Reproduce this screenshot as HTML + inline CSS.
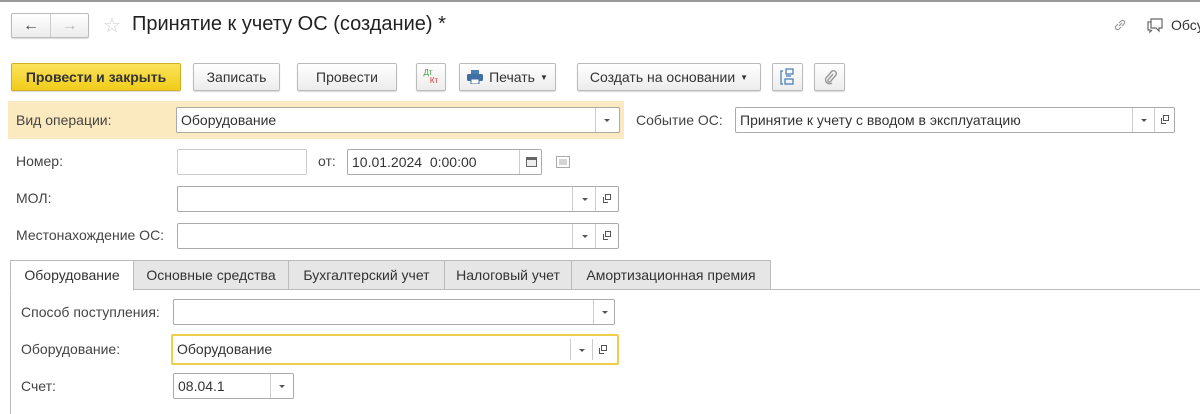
<!DOCTYPE html>
<html><head><meta charset="utf-8"><style>
*{box-sizing:border-box;margin:0;padding:0}
body{width:1200px;height:414px;background:#fff;font-family:"Liberation Sans",sans-serif;font-size:14px;color:#333;position:relative;overflow:hidden}
.a{position:absolute}
.btn{position:absolute;border:1px solid #bbb;border-radius:2px;background:linear-gradient(#fff,#ececec);box-shadow:0 1px 1px rgba(0,0,0,.15);display:flex;align-items:center;justify-content:center;color:#333;font-size:14px}
.inp{position:absolute;border:1px solid #aaa;border-radius:2px;background:#fff;height:26px;font-size:14px;line-height:24px;padding-left:4px;color:#333}
.sep{position:absolute;top:0;bottom:0;width:1px;background:#ccc}
.dd{position:absolute;top:11px;width:0;height:0;border-left:3px solid transparent;border-right:3px solid transparent;border-top:3px solid #555}
.op{position:absolute;top:7px;width:9px;height:9px}
.lbl{position:absolute;font-size:14px;color:#444}
.tab{position:absolute;top:260px;height:30px;border:1px solid #bbb;background:#e6e6e6;font-size:14px;line-height:28px;text-align:center;color:#333}
</style></head><body>
<div class="a" style="left:0;top:0;width:1200px;height:2px;background:#999"></div>
<div class="btn" style="left:11px;top:13px;width:78px;height:25px;justify-content:flex-start">
 <span style="width:39px;text-align:center;font-size:16px;font-weight:bold;color:#444">&#8592;</span><span style="width:1px;height:23px;background:#ccc"></span><span style="width:38px;text-align:center;font-size:16px;font-weight:bold;color:#bbb">&#8594;</span></div>
<div class="a" style="left:103px;top:13px;font-size:20px;color:#ccc">☆</div>
<div class="a" style="left:132px;top:13px;font-size:20px;color:#222">Принятие к учету ОС (создание) *</div>
<svg class="a" style="left:1112px;top:17px" width="16" height="16" viewBox="0 0 16 16" fill="none" stroke="#999" stroke-width="1.2"><path d="M7 9l3-3M6 7l-2 2a2 2 0 003 3l2-2M10 9l2-2a2 2 0 00-3-3L7 6"/></svg>
<svg class="a" style="left:1146px;top:16px" width="18" height="18" viewBox="0 0 18 18" fill="none" stroke="#666" stroke-width="1.2"><path d="M5 3h11v9h-3v3l-3-3H5z"/><path d="M5 6H2v8h2v2l2-2"/></svg>
<div class="a" style="left:1171px;top:17px;font-size:14px;color:#333">Обсу</div>
<div class="btn" style="left:11px;top:63px;width:170px;height:28px;background:linear-gradient(#fbe35a,#f1cc1a);border-color:#cfb021;font-weight:bold;color:#333">Провести и закрыть</div>
<div class="btn" style="left:193px;top:63px;width:87px;height:28px">Записать</div>
<div class="btn" style="left:297px;top:63px;width:100px;height:28px">Провести</div>
<div class="btn" style="left:416px;top:63px;width:30px;height:28px;font-size:8px;line-height:8px;flex-direction:column"><span style="color:#3a9b3a;margin-left:-6px">Дт</span><span style="color:#d33;margin-left:6px">Кт</span></div>
<div class="btn" style="left:459px;top:63px;width:97px;height:28px"><svg width="16" height="14" viewBox="0 0 16 14" style="margin-right:6px"><rect x="4" y="0" width="8" height="4" fill="#4a7fb5"/><rect x="0" y="4" width="16" height="7" rx="1.5" fill="#3f6fa3"/><rect x="4" y="9" width="8" height="5" fill="#fff" stroke="#3f6fa3"/></svg>Печать <span style="font-size:8px;margin-left:5px">▼</span></div>
<div class="btn" style="left:577px;top:63px;width:184px;height:28px">Создать на основании <span style="font-size:8px;margin-left:5px">▼</span></div>
<div class="btn" style="left:772px;top:63px;width:31px;height:28px"><svg width="16" height="18" viewBox="0 0 16 18" fill="none" stroke="#3f78b5" stroke-width="1.2"><rect x="6" y="1" width="7" height="5"/><rect x="5" y="11" width="8" height="5"/><path d="M3 3H1v13h2M6 8h5"/></svg></div>
<div class="btn" style="left:814px;top:63px;width:31px;height:28px"><svg width="14" height="16" viewBox="0 0 14 16" fill="none" stroke="#999" stroke-width="1.4"><path d="M10 5l-5 6a1.5 1.5 0 002 2l6-7a3 3 0 00-4-4L3 9a4 4 0 006 5"/></svg></div>
<div class="a" style="left:8px;top:101px;width:616px;height:38px;background:#fbe9bf"></div>
<div class="lbl" style="left:16px;top:112px">Вид операции:</div>
<div class="inp" style="left:176px;top:107px;width:444px">Оборудование<div class="sep" style="left:418px"></div><div class="dd" style="left:427px"></div></div>
<div class="lbl" style="left:636px;top:112px">Событие ОС:</div>
<div class="inp" style="left:735px;top:107px;width:440px">Принятие к учету с вводом в эксплуатацию<div class="sep" style="left:396px"></div><div class="dd" style="left:405px"></div><div class="sep" style="left:418px"></div><svg class="op" style="left:424px" viewBox="0 0 9 9" fill="none" stroke="#555"><rect x="3.5" y=".5" width="5" height="5"/><path d="M1.5 3v5.5H6"/></svg></div>
<div class="lbl" style="left:16px;top:153px">Номер:</div>
<div class="inp" style="left:177px;top:149px;width:130px;border-color:#ccc"></div>
<div class="lbl" style="left:318px;top:153px">от:</div>
<div class="inp" style="left:347px;top:149px;width:195px">10.01.2024&nbsp; 0:00:00<div class="sep" style="left:171px"></div><svg class="a" style="left:178px;top:6px" width="11" height="11" viewBox="0 0 11 11"><rect x="0" y="1" width="11" height="10" fill="#666"/><rect x="1" y="4" width="9" height="6" fill="#eee"/></svg></div>
<svg class="a" style="left:556px;top:156px" width="14" height="12" viewBox="0 0 14 12" fill="none" stroke="#aaa"><rect x=".5" y=".5" width="13" height="11"/><path d="M3 4h8M3 6h8M3 8h8"/></svg>
<div class="lbl" style="left:16px;top:190px">МОЛ:</div>
<div class="inp" style="left:177px;top:186px;width:442px"><div class="sep" style="left:394px"></div><div class="dd" style="left:404px"></div><div class="sep" style="left:417px"></div><svg class="op" style="left:424px" viewBox="0 0 9 9" fill="none" stroke="#555"><rect x="3.5" y=".5" width="5" height="5"/><path d="M1.5 3v5.5H6"/></svg></div>
<div class="lbl" style="left:16px;top:227px">Местонахождение ОС:</div>
<div class="inp" style="left:177px;top:223px;width:442px"><div class="sep" style="left:394px"></div><div class="dd" style="left:404px"></div><div class="sep" style="left:417px"></div><svg class="op" style="left:424px" viewBox="0 0 9 9" fill="none" stroke="#555"><rect x="3.5" y=".5" width="5" height="5"/><path d="M1.5 3v5.5H6"/></svg></div>
<div class="a" style="left:10px;top:289px;width:1190px;height:1px;background:#bbb"></div>
<div class="a" style="left:10px;top:289px;width:1px;height:125px;background:#bbb"></div>
<div class="tab" style="left:133px;width:156px">Основные средства</div>
<div class="tab" style="left:288px;width:157px">Бухгалтерский учет</div>
<div class="tab" style="left:444px;width:128px">Налоговый учет</div>
<div class="tab" style="left:571px;width:200px">Амортизационная премия</div>
<div class="tab" style="left:10px;width:124px;background:#fff;border-bottom-color:#fff;height:31px">Оборудование</div>
<div class="lbl" style="left:21px;top:304px">Способ поступления:</div>
<div class="inp" style="left:173px;top:299px;width:442px"><div class="sep" style="left:419px"></div><div class="dd" style="left:428px"></div></div>
<div class="lbl" style="left:21px;top:341px">Оборудование:</div>
<div class="inp" style="left:171px;top:334px;width:448px;height:31px;border:2px solid #f0cd4a;line-height:27px">Оборудование<div class="sep" style="left:397px;top:3px;bottom:3px"></div><div class="dd" style="left:406px;top:13px"></div><div class="sep" style="left:419px;top:3px;bottom:3px"></div><svg class="op" style="left:425px;top:9px" viewBox="0 0 9 9" fill="none" stroke="#555"><rect x="3.5" y=".5" width="5" height="5"/><path d="M1.5 3v5.5H6"/></svg></div>
<div class="lbl" style="left:21px;top:378px">Счет:</div>
<div class="inp" style="left:173px;top:373px;width:121px">08.04.1<div class="sep" style="left:96px"></div><div class="dd" style="left:105px"></div></div>
</body></html>
